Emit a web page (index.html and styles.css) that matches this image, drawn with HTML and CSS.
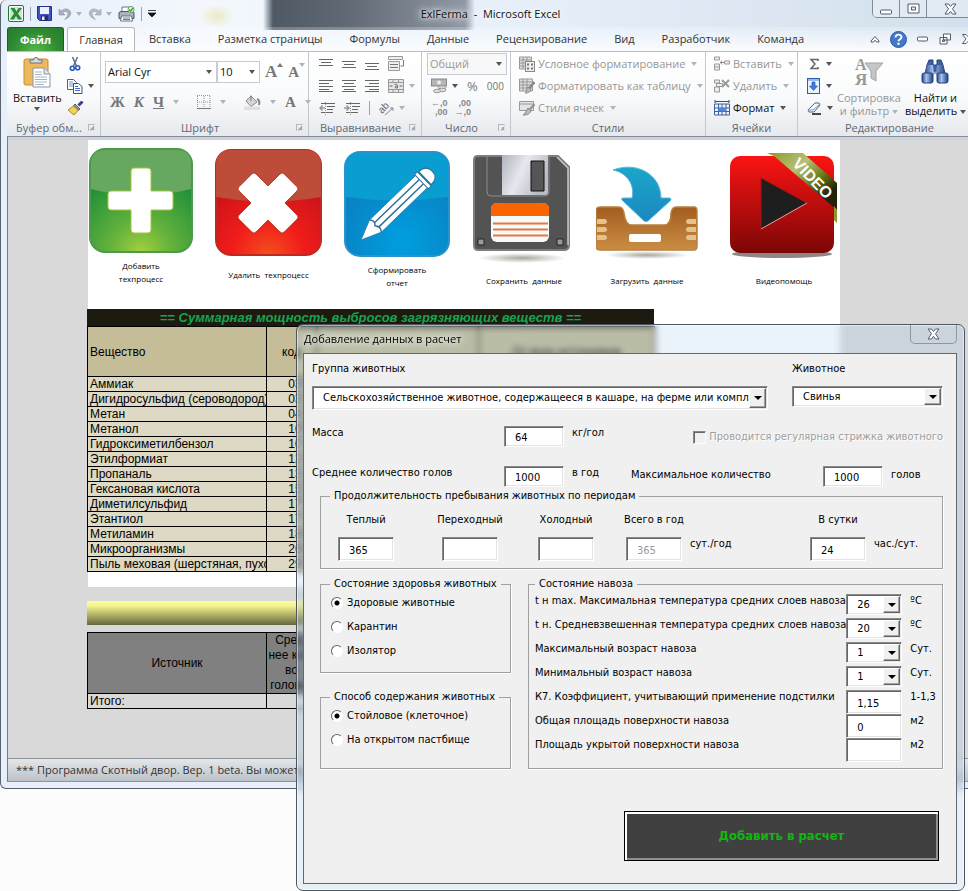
FILE: index.html
```html
<!DOCTYPE html>
<html lang="ru">
<head>
<meta charset="utf-8">
<title>ExlFerma - Microsoft Excel</title>
<link rel="stylesheet" href="styles.css">
</head>
<body>
<div class="desktop">
<main class="excel">
  <header class="titlebar">
    <div class="qat">
      <svg width="16" height="17" viewBox="0 0 16 17"><rect x=".5" y=".5" width="15" height="16" rx="1.5" fill="#fff" stroke="#1e7a35"/><rect x="2" y="2" width="12" height="13" fill="#cfe8cd"/><path d="M2.500 3h4l2 3.500L10.500 3h3.500L10 8.500l4 6h-4l-2-3.500-2 3.500H2l4-6z" fill="#2a8b3f"/></svg>
      <i class="sep"></i>
      <button aria-label="Сохранить"><svg width="15" height="15" viewBox="0 0 15 15"><path d="M.5.5h14v14h-12l-2-2z" fill="#4352c0" stroke="#27318c"/><rect x="3" y="1" width="9" height="7" fill="#eef2fb"/><rect x="4" y="9.500" width="7" height="5" fill="#222b6d"/><rect x="5" y="10.500" width="2.500" height="3.500" fill="#e8ebf5"/></svg></button>
      <button aria-label="Отменить" class="wide"><svg width="14" height="14" viewBox="0 0 14 14"><path d="M1 2v6h6L4.800 5.800C7 3.500 10.500 4.500 9.800 7.500 9.300 9.500 8 11 6.500 12.500 10 11.500 12.800 8.800 12.800 6 12.500 1.500 6.500.5 3.200 4z" fill="#a7b0bb" stroke="#8c96a3" stroke-width=".6"/></svg><i class="arr dim"></i></button>
      <button aria-label="Вернуть" class="wide"><svg width="14" height="14" viewBox="0 0 14 14"><path transform="translate(14 0) scale(-1 1)" d="M1 2v6h6L4.800 5.800C7 3.500 10.500 4.500 9.800 7.500 9.300 9.500 8 11 6.500 12.500 10 11.500 12.800 8.800 12.800 6 12.500 1.500 6.500.5 3.200 4z" fill="#b3bbc5" stroke="#98a1ac" stroke-width=".6"/></svg><i class="arr dim"></i></button>
      <button aria-label="Печать"><svg width="17" height="16" viewBox="0 0 17 16"><path d="M4 6V1h8v5" fill="#fff" stroke="#6c7580"/><path d="M1 6.500l2-1h11l2 1v6H1z" fill="#aab2bc" stroke="#4d5560"/><path d="M3.500 10h10l1 5h-12z" fill="#fff" stroke="#6c7580"/><path d="M5 12h7M5 13.500h7" stroke="#4d86c8"/><circle cx="13" cy="3.500" r="3" fill="#fff" stroke="#58a04c"/><path d="M11.300 3.500l1.400 1.400L15 2" fill="none" stroke="#2f9c2f" stroke-width="1.400"/></svg></button>
      <i class="sep"></i>
      <button aria-label="Настройка панели"><svg width="8" height="8" viewBox="0 0 8 8"><path d="M0 .5h8M0 3h8L4 7z" fill="#111" stroke="#111" stroke-width=".8"/></svg></button>
    </div>
    <h1>ExlFerma&nbsp; -&nbsp; Microsoft Excel</h1>
    <div class="winbtns">
      <button aria-label="Свернуть"><svg width="13" height="12" viewBox="0 0 13 12"><rect x=".5" y="7" width="11" height="4" rx="1" fill="#fff" stroke="#525c6b"/></svg></button>
      <button aria-label="Развернуть"><svg width="13" height="12" viewBox="0 0 13 12"><path d="M1 1h11v9H1zM4.500 4h4v3h-4z" fill="#fff" fill-rule="evenodd" stroke="#525c6b"/></svg></button>
      <button aria-label="Закрыть" class="x"><svg width="13" height="12" viewBox="0 0 13 12"><path d="M1 1h3.500l2 2.500 2-2.500H12L8.500 5.800 12 11H8.500l-2-2.700-2 2.700H1l3.500-5.200z" fill="#fff" stroke="#525c6b"/></svg></button>
    </div>
  </header>

  <nav class="tabs">
    <button class="file">Файл</button>
    <button class="on">Главная</button>
    <button>Вставка</button>
    <button>Разметка страницы</button>
    <button>Формулы</button>
    <button>Данные</button>
    <button>Рецензирование</button>
    <button>Вид</button>
    <button>Разработчик</button>
    <button>Команда</button>
    <div class="mdi">
      <svg width="10" height="8" viewBox="0 0 10 8"><path d="M1 6l4-4.500L9 6v1H6.500L5 5.200 3.500 7H1z" fill="#fff" stroke="#525c6b"/></svg>
      <svg width="17" height="17" viewBox="0 0 17 17"><circle cx="8.500" cy="8.500" r="8" fill="#4278c6" stroke="#2d5ba6"/><path d="M5.500 6.500c0-4 6-3.800 6-.2 0 2-3 2-3 4" fill="none" stroke="#fff" stroke-width="1.800"/><circle cx="8.500" cy="12.800" r="1.200" fill="#fff"/></svg>
      <svg width="12" height="6" viewBox="0 0 12 6"><rect x=".5" y="1" width="10" height="4" rx="1" fill="#fff" stroke="#525c6b"/></svg>
      <svg width="13" height="12" viewBox="0 0 13 12"><path d="M4.500 1h7v6h-7zM1 4.500h7V11H1zM3.500 7h2v1.500h-2z" fill="#fff" fill-rule="evenodd" stroke="#525c6b"/></svg>
      <svg width="12" height="10" viewBox="0 0 12 10"><path d="M.5.5H4l2 2 2-2h3.500L8 5l3.500 4.500H8l-2-2-2 2H.5L4 5z" fill="#fff" stroke="#525c6b"/></svg>
    </div>
  </nav>

  <section class="ribbon">
    <div class="group g-clip">
      <div class="body">
        <button class="big on"><svg width="28" height="32" viewBox="0 0 28 32"><rect x="1" y="3" width="24" height="26" rx="2" fill="#eeb95e" stroke="#c98d2d"/><path d="M7 7V4h3.500a2.500 2.500 0 0 1 5 0H19v3z" fill="#d8dce1" stroke="#6a7078"/><path d="M10 12h11l6 6v13H10z" fill="#fff" stroke="#8795a8"/><path d="M21 12v6h6" fill="#dfe6ee" stroke="#8795a8"/><path d="M12 16h7M12 18.500h7M12 21h12M12 23.500h12M12 26h12M12 28.500h9" stroke="#a6b3c4"/></svg><span>Вставить</span><i class="arr"></i></button>
        <div class="col">
          <button aria-label="Вырезать"><svg width="16" height="16" viewBox="0 0 16 16"><path d="M5.500 1l4 9M10.500 1l-4 9" stroke="#5b6c83" stroke-width="1.500"/><circle cx="5.300" cy="12.200" r="2" fill="none" stroke="#2b59b8" stroke-width="1.600"/><circle cx="10.700" cy="11.700" r="2" fill="none" stroke="#2b59b8" stroke-width="1.600"/></svg></button>
          <button aria-label="Копировать"><svg width="16" height="16" viewBox="0 0 16 16"><path d="M.5 1.500h6l3 3v7h-9z" fill="#fff" stroke="#3c62a8"/><path d="M2 4h4M2 6h5M2 8h5" stroke="#6e93d0"/><path d="M6.500 5.500h5l3.500 3v7H6.500z" fill="#fff" stroke="#2f559c"/><path d="M8 8.500h3M8 10.500h5M8 12.500h5" stroke="#3f70c4"/></svg><i class="arr"></i></button>
          <button aria-label="Формат по образцу"><svg width="17" height="15" viewBox="0 0 17 15"><path d="M15.500.5l-4 4" stroke="#4a3c8c" stroke-width="3"/><path d="M8 3l5 5-2 1.500L6.500 5z" fill="#8d94a3" stroke="#555c6b"/><path d="M6.500 5L11 9.500 7 14 1 9z" fill="#f2d25c" stroke="#ad8a22"/></svg></button>
        </div>
      </div>
      <footer><span>Буфер обм...</span><b class="launch"></b></footer>
    </div>

    <div class="group g-font">
      <div class="body stack">
        <div class="line fontline">
          <span class="combo"><label for="fn" class="sr">Шрифт</label><select id="fn"><option>Arial Cyr</option></select><i class="arr"></i></span>
          <span class="combo size"><label for="fs" class="sr">Размер</label><select id="fs"><option>10</option></select><i class="arr"></i></span>
          <button class="serif a1" aria-label="Увеличить">A<i class="up"></i></button>
          <button class="serif a2" aria-label="Уменьшить">A<i class="arr dim"></i></button>
        </div>
        <div class="line fmt">
          <button class="serif">Ж</button><button class="serif it">К</button><button class="serif un">Ч</button><i class="arr dim"></i><i class="sep"></i>
          <svg width="14" height="14" viewBox="0 0 14 14"><path d="M.5 1v12M7 1v12M13 1v12M0 .5h14M0 7h14" stroke="#999" stroke-dasharray="1 1"/><path d="M0 13.500h14" stroke="#777"/></svg><i class="arr dim"></i><i class="sep"></i>
          <svg width="17" height="16" viewBox="0 0 17 16"><path d="M7 2l6 6-6 4.500L2 7z" fill="#d5d5d5" stroke="#888"/><path d="M7 7V1.500" stroke="#777"/><path d="M13 5c3 1 2.500 4 2 6" fill="none" stroke="#888" stroke-width="2"/><rect y="12.500" width="16" height="3.500" fill="#e1dde0"/></svg><i class="arr dim"></i>
          <button class="serif">A</button><i class="arr dim"></i>
        </div>
      </div>
      <footer><span>Шрифт</span><b class="launch"></b></footer>
    </div>

    <div class="group g-align">
      <div class="body stack">
        <div class="line">
          <svg width="14" height="12" viewBox="0 0 14 12"><path d="M0 1.500h14M2 4.500h10M0 7.500h14" stroke="#666"/></svg>
          <svg width="14" height="12" viewBox="0 0 14 12"><path d="M0 3.500h14M2 6.500h10M0 9.500h14" stroke="#666"/></svg>
          <svg width="14" height="12" viewBox="0 0 14 12"><path d="M0 5.500h14M2 8.500h10M0 11.500h14" stroke="#666"/></svg>
          <svg width="17" height="16" viewBox="0 0 17 16"><path d="M.5.500h14v3H.5zM.5 5.500h11v9H.5z" fill="#eee" stroke="#999"/><path d="M2 8.500h8M2 11.500h8M15.500 4v6h-3" fill="none" stroke="#777"/></svg>
        </div>
        <div class="line">
          <svg width="14" height="12" viewBox="0 0 14 12"><path d="M0 .5h14M0 3.500h10M0 6.500h14M0 9.500h10M0 11.500h14" stroke="#666"/></svg>
          <svg width="14" height="12" viewBox="0 0 14 12"><path d="M0 .5h14M2 3.500h10M0 6.500h14M2 9.500h10M0 11.500h14" stroke="#666"/></svg>
          <svg width="14" height="12" viewBox="0 0 14 12"><path d="M0 .5h14M4 3.500h10M0 6.500h14M4 9.500h10M0 11.500h14" stroke="#666"/></svg>
          <span class="pair"><svg width="17" height="14" viewBox="0 0 17 14"><path d="M.5.5h15v13H.5zM.5 3.500h15M.5 10.500h15M5 .5v3M10.500.5v3M5 10.500v3M10.500 10.500v3" fill="#e6e6e6" stroke="#999"/><path d="M1.500 7h3M11.500 7h3M6.500 5.500c3-.8 3 .3 3 3.500-3.500 0-3.500-2 0-2" fill="none" stroke="#666"/></svg><i class="arr dim"></i></span>
        </div>
        <div class="line">
          <svg width="16" height="13" viewBox="0 0 16 13"><path d="M2 1.500h14M8 4.500h8M8 7.500h6M2 10.500h12" stroke="#666"/><path d="M6 6H1M3.500 3.500L1 6l2.500 2.500" fill="none" stroke="#999" stroke-width="1.500"/><path d="M6.500 0v13" stroke="#999" stroke-dasharray="1 1"/></svg>
          <svg width="16" height="13" viewBox="0 0 16 13"><path d="M2 1.500h14M8 4.500h8M8 7.500h6M2 10.500h12" stroke="#666"/><path d="M0 6h5M2.500 3.500L5 6 2.500 8.500" fill="none" stroke="#999" stroke-width="1.500"/><path d="M6.500 0v13" stroke="#999" stroke-dasharray="1 1"/></svg>
          <i class="sep"></i>
          <span class="pair"><svg width="16" height="15" viewBox="0 0 16 15"><text x="0" y="10" transform="rotate(-45 5 8)" font-family="Liberation Sans" font-size="10" fill="#666">ab</text><path d="M6 14l8-7M14 7h-3M14 7v3" fill="none" stroke="#888"/></svg><i class="arr dim"></i></span>
        </div>
      </div>
      <footer><span>Выравнивание</span><b class="launch"></b></footer>
    </div>

    <div class="group g-num">
      <div class="body stack">
        <span class="combo off"><label for="nf" class="sr">Формат числа</label><select id="nf"><option>Общий</option></select><i class="arr"></i></span>
        <div class="line">
          <span class="pair"><svg width="17" height="16" viewBox="0 0 17 16"><rect x=".5" y="1" width="15" height="7" fill="#b5b5b5" stroke="#888"/><circle cx="8" cy="4.500" r="2" fill="#eee"/><ellipse cx="11" cy="9.500" rx="4" ry="1.800" fill="#ddd" stroke="#999"/><ellipse cx="11" cy="12" rx="4" ry="1.800" fill="#ddd" stroke="#999"/><ellipse cx="6" cy="13" rx="3.500" ry="1.800" fill="#ddd" stroke="#999"/></svg><i class="arr"></i></span>
          <button class="grey pct">%</button><button class="grey sm">000</button>
        </div>
        <div class="line dec">
          <span class="decimal">←,0<br>,00</span><span class="decimal">,00<br>→,0</span>
        </div>
      </div>
      <footer><span>Число</span><b class="launch"></b></footer>
    </div>

    <div class="group g-styles">
      <div class="body stack">
        <button class="cmd off"><svg width="16" height="16" viewBox="0 0 16 16"><path d="M.5 1h12v12H.5zM.5 4h12M.5 7h12M.5 10h12M4 1v12M8 1v12" fill="#ddd" stroke="#999"/><rect x="6.500" y="5.500" width="9" height="10" fill="#eee" stroke="#888"/><path d="M8 8.500h2M12 8.500h2M8 12.500h2M12 12.500h2" stroke="#777" stroke-width="2"/></svg>Условное форматирование<i class="arr dim"></i></button>
        <button class="cmd off"><svg width="16" height="16" viewBox="0 0 16 16"><path d="M.5 1h13v12H.5zM.5 4h13M.5 7h13M.5 10h13M4 1v12M8 1v12" fill="#ddd" stroke="#999"/><path d="M15.500 4l-6 7" stroke="#888" stroke-width="2.500"/><path d="M9 9l3 3c-2 3-4 3-6 3 2-1.500 1-4 3-6z" fill="#bbb" stroke="#888"/></svg>Форматировать как таблицу<i class="arr dim"></i></button>
        <button class="cmd off"><svg width="16" height="16" viewBox="0 0 16 16"><path d="M.5 1.500h14v9H.5zM.5 4h14" fill="#e4e4e4" stroke="#999"/><path d="M15.500 4l-6 7" stroke="#999" stroke-width="2.500"/><path d="M9 8l3 3c-2 4-5 4-8 4 3-1.500 3-5 5-7z" fill="#bbb" stroke="#888"/></svg>Стили ячеек<i class="arr dim"></i></button>
      </div>
      <footer><span>Стили</span></footer>
    </div>

    <div class="group g-cells">
      <div class="body stack">
        <button class="cmd off"><svg width="16" height="16" viewBox="0 0 16 16"><path d="M.5 1h5v3h-5zM.5 8h5v6h-5zM.5 11h5M10.500 5h5v3h-5z" fill="#eee" stroke="#999"/><path d="M6 6.500h4M8 4.500L6.500 6.500 8 8.500" stroke="#888" fill="none"/></svg>Вставить<i class="arr dim"></i></button>
        <button class="cmd off"><svg width="16" height="16" viewBox="0 0 16 16"><path d="M.5 2h5v3h-5zM.5 9h5v5h-5zM2.500 5.500h6v3h-6z" fill="#eee" stroke="#999"/><path d="M8 2l7 7M15 2L8 9" stroke="#999" stroke-width="2"/></svg>Удалить<i class="arr dim"></i></button>
        <button class="cmd"><svg width="16" height="16" viewBox="0 0 16 16"><path d="M1 1.500h14M1 0v3M15 0v3" stroke="#2d4f8e"/><path d="M.5 4h15v11H.5zM.5 8h15M.5 11.500h15M4.500 4v11M8 4v11M12 4v11" fill="#eef3fb" stroke="#3e5f9e"/><rect x="4.500" y="8" width="7" height="3.500" fill="#4f86dc"/></svg>Формат<i class="arr"></i></button>
      </div>
      <footer><span>Ячейки</span></footer>
    </div>

    <div class="group g-edit">
      <div class="body">
        <div class="col">
          <button aria-label="Сумма"><svg width="14" height="12" viewBox="0 0 14 12"><path d="M11 3V1.500H4L8 6l-4 4.500h7V9" fill="none" stroke="#666" stroke-width="1.500"/></svg><i class="arr"></i></button>
          <button aria-label="Заполнить"><svg width="14" height="16" viewBox="0 0 14 16"><rect x=".5" y=".5" width="12" height="15" fill="#eaf2fd" stroke="#2c5fae"/><path d="M5 4h3v4h2.500l-4 4.500L2.500 8H5z" fill="#3f7be0" stroke="#1d4fa0" stroke-width=".6"/><path d="M1 2h11" stroke="#4a7fce"/></svg><i class="arr"></i></button>
          <button aria-label="Очистить"><svg width="15" height="13" viewBox="0 0 15 13"><path d="M8 1h4l1 2-6 7H2L1 8z" fill="#f5f7fa" stroke="#56657c"/><path d="M1 8h5l7-6" fill="none" stroke="#7a9cc9"/><path d="M5 12h9" stroke="#111" stroke-width="1.500"/></svg><i class="arr"></i></button>
        </div>
        <button class="big off"><svg width="30" height="32" viewBox="0 0 30 32"><path d="M11 7h18l-7 8v10l-5-3v-7z" fill="#c6c6c6" stroke="#a3a3a3"/><text x="1" y="14" font-family="Liberation Serif" font-size="16" font-weight="bold" fill="#999">А</text><text x="1" y="29" font-family="Liberation Serif" font-size="17" font-weight="bold" fill="#999">Я</text></svg><span>Сортировка<br>и фильтр <i class="arr dim"></i></span></button>
        <button class="big on"><svg width="28" height="32" viewBox="0 0 28 32"><defs><linearGradient id="bi"><stop offset="0" stop-color="#27498c"/><stop offset=".4" stop-color="#a9c3ec"/><stop offset="1" stop-color="#1f3f80"/></linearGradient></defs><path d="M8 4h4v5h4V4h4l2 5 2 9h-9v-3h-2v3H4l2-9z" fill="#3c5fa6" stroke="#22427f"/><path d="M6 9h6l1 9H3.500zM16 9h6l2.500 9H15z" fill="url(#bi)"/><rect x="1" y="17" width="11" height="10" rx="2" fill="url(#bi)" stroke="#22427f"/><rect x="16" y="17" width="11" height="10" rx="2" fill="url(#bi)" stroke="#22427f"/></svg><span>Найти и<br>выделить <i class="arr"></i></span></button>
      </div>
      <footer><span>Редактирование</span></footer>
    </div>
  </section>

  <section class="sheet">
    <div class="page">
      <div class="tiles">
        <button class="tile t1">
          <svg width="104" height="116" viewBox="0 0 104 116"><defs><radialGradient id="gr" cx=".5" cy="1" r=".75"><stop offset="0" stop-color="#a3cf3c"/><stop offset=".4" stop-color="#64b23c"/><stop offset="1" stop-color="#23913a"/></radialGradient></defs><rect x="1" y="5" width="102" height="103" rx="15" fill="url(#gr)" stroke="#4c9a4a" stroke-width="2"/><path d="M2 45V20Q2 6 16 6h72q14 0 14 14v25Q52 58 2 45z" fill="#66a860"/><path d="M45 24h14q3 0 3 3v20h19q3 0 3 3v13q0 3-3 3H62v20q0 3-3 3H45q-3 0-3-3V66H22q-3 0-3-3V50q0-3 3-3h20V27q0-3 3-3z" fill="#fff" stroke="#a6c63a"/></svg>
          <span>Добавить<br>техпроцесс</span></button>
        <button class="tile t2">
          <svg width="107" height="116" viewBox="0 0 107 116"><defs><radialGradient id="rd" cx=".5" cy="1" r=".75"><stop offset="0" stop-color="#f4501e"/><stop offset=".45" stop-color="#f01d1a"/><stop offset="1" stop-color="#cb131a"/></radialGradient></defs><rect x="1" y="6" width="105" height="105" rx="15" fill="url(#rd)" stroke="#bf2a20" stroke-width="2"/><path d="M1 53V21Q1 6 16 6h75q15 0 15 15v32Q53 62 1 53z" fill="#bd4d38"/><g transform="translate(53 59) rotate(45)"><path d="M-9-32H9q3 0 3 3v17h17q3 0 3 3V9q0 3-3 3H12v17q0 3-3 3H-9q-3 0-3-3V12h-17q-3 0-3-3V-9q0-3 3-3h17v-17q0-3 3-3z" fill="#fff" stroke="#b03018" stroke-width=".8"/></g></svg>
          <span>Удалить&nbsp; техпроцесс</span></button>
        <button class="tile t3">
          <svg width="106" height="116" viewBox="0 0 106 116"><defs><radialGradient id="bl" cx=".55" cy=".85" r=".7"><stop offset="0" stop-color="#009fe0"/><stop offset="1" stop-color="#0a7fbf"/></radialGradient></defs><rect x="1" y="8" width="104" height="104" rx="15" fill="url(#bl)" stroke="#2b93cc" stroke-width="2"/><path d="M2 53V23Q2 9 16 9h74q14 0 14 14v30Q53 60 2 53z" fill="#0a9dd2"/><g transform="translate(17 96) rotate(-44)"><path d="M0 0L20-8.500H86v17H20z" fill="#fff" stroke="#2a7ba8" stroke-width=".8"/><path d="M20-8.500q4 4 0 8 4 5 0 9M22-3h62M22 3h62" fill="none" stroke="#2a6f98" stroke-width="1.400"/><path d="M84-10h4v20h-4z" fill="#fff" stroke="#2a6f98"/><path d="M89-9q10 0 10 9T89 9z" fill="#fff" stroke="#2a6f98"/></g></svg>
          <span>Сформировать<br>отчет</span></button>
        <button class="tile t4">
          <svg width="102" height="120" viewBox="0 0 102 120"><defs><linearGradient id="sh" x2="1" y2=".4"><stop offset="0" stop-color="#aeb3be"/><stop offset=".5" stop-color="#e6e8ed"/><stop offset="1" stop-color="#b9bdc8"/></linearGradient><radialGradient id="dr"><stop offset="0" stop-color="#a8a8a0"/><stop offset="1" stop-color="#fff"/></radialGradient></defs><ellipse cx="49" cy="114" rx="44" ry="5" fill="url(#dr)"/><path d="M5 12h80l11 11v78q0 5-5 5H5q-4 0-4-5V16q0-4 4-4z" fill="#535353" stroke="#7d7d7d" stroke-width="2"/><path d="M84 13l11 11v77" fill="none" stroke="#c9c9c9" stroke-width="1.500"/><path d="M14 12v36q0 4 4 4h54q4 0 4-4V12" fill="none" stroke="#8d8d8d"/><path d="M29 11h46v37q0 3-3 3H29z" fill="url(#sh)"/><path d="M58 17h13v30H58z" fill="#555" stroke="#111"/><rect x="18" y="59" width="58" height="39" rx="6" fill="#f5fbfc"/><path d="M18 72v-7q0-6 6-6h46q6 0 6 6v7z" fill="#f96500"/><path d="M20 79.500h55M20 85.500h55M20 91.500h55" stroke="#e8793a" stroke-width="2"/><path d="M5 95h6v6H5zM84 95h6v6h-6z" fill="#9999a2" stroke="#222"/></svg>
          <span>Сохранить&nbsp; данные</span></button>
        <button class="tile t5">
          <svg width="102" height="120" viewBox="0 0 102 120"><defs><linearGradient id="wd" x2="0" y2="1"><stop offset="0" stop-color="#a15d20"/><stop offset="1" stop-color="#cb8d43"/></linearGradient><linearGradient id="ar" x2="0" y2="1"><stop offset="0" stop-color="#1ba6ca"/><stop offset="1" stop-color="#1b88c0"/></linearGradient></defs><ellipse cx="51" cy="111" rx="42" ry="4" fill="url(#dr)"/><path d="M4 63h19q4 0 5 6c1 8 3 12 8 12h32c5 0 7-4 7-12q1-6 5-6h18q3 0 3 4v35q0 4-3 4H4q-4 0-4-4V67q0-4 4-4z" fill="url(#wd)" stroke="#b8813e" stroke-width="1.500"/><path d="M1 75h7q3 0 3 2.500T8 80H1zM1 83h7q3 0 3 2.500T8 88H1zM1 91h7q3 0 3 2.500T8 96H1zM100 75h-7q-3 0-3 2.500t3 2.500h7zM100 83h-7q-3 0-3 2.500t3 2.500h7zM100 91h-7q-3 0-3 2.500t3 2.500h7z" fill="#e3c28c"/><rect x="33" y="90" width="32" height="8" rx="2" fill="#fff"/><path d="M17 26C40 17 65 30 65 54h9q2 1 0 3L52 77q-2 1-4 0L26 56q-1-2 1-2h9C39 42 32 29 17 26z" fill="url(#ar)" stroke="#5bb6dc"/></svg>
          <span>Загрузить&nbsp; данные</span></button>
        <button class="tile t6">
          <svg width="108" height="120" viewBox="0 0 108 120"><defs><linearGradient id="vd" x2="0" y2="1"><stop offset="0" stop-color="#fb1414"/><stop offset="1" stop-color="#7c0606"/></linearGradient><linearGradient id="rb" x2="1" y2="1"><stop offset="0" stop-color="#8b9a25"/><stop offset=".35" stop-color="#b9c178"/><stop offset=".6" stop-color="#66760f"/><stop offset=".8" stop-color="#20240a"/></linearGradient></defs><ellipse cx="52" cy="110" rx="50" ry="4" fill="#433" opacity=".6"/><rect x="0" y="12" width="104" height="97" rx="10" fill="url(#vd)"/><path d="M0 100Q20 70 58 57" fill="none" stroke="#a11" stroke-width=".6"/><path d="M31 34v51l46-26z" fill="#1e1e1e" stroke="#a11"/><path d="M31 85l46-26" stroke="#d9a0a0"/><path d="M37 9h36l34 30v27L44 12z" fill="url(#rb)"/><path d="M104 62l3 4v13l-3-3z" fill="#8b9a25"/><text x="83" y="40" transform="rotate(46 83 34)" text-anchor="middle" font-family="Liberation Sans" font-weight="bold" font-size="16" fill="#fff">VIDEO</text></svg>
          <span>Видеопомощь</span></button>
      </div>
      <h2>== Суммарная мощность выбросов загрязняющих веществ ==</h2>
      <table class="grid sum">
        <colgroup><col class="c1"><col class="c2"><col class="c3"><col class="c4"></colgroup>
        <thead><tr><th>Вещество</th><th class="mid">код</th><th></th><th class="mid">От всех источников</th></tr></thead>
        <tbody>
          <tr><td>Аммиак</td><td>0303</td><td></td><td></td></tr>
          <tr><td>Дигидросульфид (сероводород)</td><td>0333</td><td></td><td></td></tr>
          <tr><td>Метан</td><td>0410</td><td></td><td></td></tr>
          <tr><td>Метанол</td><td>1052</td><td></td><td></td></tr>
          <tr><td>Гидроксиметилбензол</td><td>1071</td><td></td><td></td></tr>
          <tr><td>Этилформиат</td><td>1246</td><td></td><td></td></tr>
          <tr><td>Пропаналь</td><td>1314</td><td></td><td></td></tr>
          <tr><td>Гексановая кислота</td><td>1531</td><td></td><td></td></tr>
          <tr><td>Диметилсульфид</td><td>1707</td><td></td><td></td></tr>
          <tr><td>Этантиол</td><td>1728</td><td></td><td></td></tr>
          <tr><td>Метиламин</td><td>1849</td><td></td><td></td></tr>
          <tr><td>Микроорганизмы</td><td>2603</td><td></td><td></td></tr>
          <tr><td>Пыль меховая (шерстяная, пуховая)</td><td>2920</td><td></td><td></td></tr>
        </tbody>
      </table>
    </div>
    <div class="yellow"></div>
    <table class="grid src">
      <colgroup><col class="c1"><col class="c2"><col class="c3"><col class="c4"></colgroup>
      <thead><tr><th class="mid">Источник</th><th class="mid">Сред-<br>нее кол-<br>во<br>головы,</th><th></th><th></th></tr></thead>
      <tbody><tr><td>Итого:</td><td></td><td></td><td></td></tr></tbody>
    </table>
  </section>
  <footer class="status">*** Программа Скотный двор. Вер. 1 beta. Вы можете</footer>
</main>

<section class="dialog" role="dialog" aria-labelledby="dt">
  <header>
    <h2 id="dt">Добавление данных в расчет</h2>
    <button class="close" aria-label="Закрыть"><svg width="13" height="12" viewBox="0 0 13 12"><path d="M1 1h3.500l2 2.500 2-2.500H12L8.500 5.800 12 11H8.500l-2-2.700-2 2.700H1l3.500-5.200z" fill="#fff" stroke="#525c6b"/></svg></button>
  </header>
  <form class="client">
    <div class="who">
      <div class="f"><label for="grp">Группа животных</label>
        <span class="sel tall"><select id="grp"><option>Сельскохозяйственное животное, содержащееся в кашаре, на ферме или комплексе</option></select><i></i></span></div>
      <div class="f"><label for="kind">Животное</label>
        <span class="sel"><select id="kind"><option>Свинья</option></select><i></i></span></div>
    </div>
    <div class="heads">
      <label for="mass">Масса</label><input id="mass" value="64"><span class="unit">кг/гол</span>
      <label class="check"><input type="checkbox" disabled>Проводится регулярная стрижка животного</label>
    </div>
    <div class="heads">
      <label for="avg">Среднее количество голов</label><input id="avg" value="1000"><span class="unit">в год</span>
      <label for="max" class="low">Максимальное количество</label><input id="max" value="1000"><span class="unit low">голов</span>
    </div>
    <div class="sets">
      <fieldset class="periods">
        <legend>Продолжительность пребывания животных по периодам</legend>
        <div class="cells">
          <div class="p"><label for="p1">Теплый</label><input id="p1" value="365"></div>
          <div class="p"><label for="p2">Переходный</label><input id="p2"></div>
          <div class="p"><label for="p3">Холодный</label><input id="p3"></div>
          <div class="p"><label for="p4">Всего в год</label><input id="p4" value="365" disabled></div>
          <span class="per">сут./год</span>
          <div class="p"><label for="p5">В сутки</label><input id="p5" value="24"></div>
          <span class="per">час./сут.</span>
        </div>
      </fieldset>
      <div class="left">
        <fieldset class="radios health">
          <legend>Состояние здоровья животных</legend>
          <label><input type="radio" name="h" checked>Здоровые животные</label>
          <label><input type="radio" name="h">Карантин</label>
          <label><input type="radio" name="h">Изолятор</label>
        </fieldset>
        <fieldset class="radios keep">
          <legend>Способ содержания животных</legend>
          <label><input type="radio" name="k" checked>Стойловое (клеточное)</label>
          <label><input type="radio" name="k">На открытом пастбище</label>
        </fieldset>
      </div>
      <fieldset class="manure">
        <legend>Состояние навоза</legend>
        <label for="m1">t н max. Максимальная температура средних слоев навоза</label><span class="sel"><select id="m1"><option>26</option></select><i></i></span><span>ºC</span>
        <label for="m2">t н. Средневзвешенная температура средних слоев навоза</label><span class="sel"><select id="m2"><option>20</option></select><i></i></span><span>ºC</span>
        <label for="m3">Максимальный возраст навоза</label><span class="sel"><select id="m3"><option>1</option></select><i></i></span><span>Сут.</span>
        <label for="m4">Минимальный возраст навоза</label><span class="sel"><select id="m4"><option>1</option></select><i></i></span><span>Сут.</span>
        <label for="m5">К7. Коэффициент, учитывающий применение подстилки</label><input id="m5" value="1,15"><span class="range">1-1,3</span>
        <label for="m6">Общая площадь поверхности навоза</label><input id="m6" value="0"><span>м2</span>
        <label for="m7">Площадь укрытой поверхности навоза</label><input id="m7"><span>м2</span>
      </fieldset>
    </div>
    <button type="button" class="add">Добавить в расчет</button>
  </form>
</section>
</div>
</body>
</html>
```
FILE: styles.css
```css
* { box-sizing: border-box; }
body { margin: 0; background: #fcfcfc; font: 11px/16px "Open Sans", "Noto Sans", sans-serif; color: #111; }
button { font: inherit; color: inherit; background: none; border: 0; padding: 0; margin: 0; }
h1, h2 { margin: 0; font: inherit; }
svg { display: block; flex: none; }
i { font-style: normal; }
.sr { position: absolute; width: 1px; height: 1px; overflow: hidden; clip-path: inset(50%); }
.desktop { position: relative; min-height: 100vh; overflow: hidden; }

/* Excel window; it runs past the right edge of the desktop */
.excel {
  margin-right: -14px; padding: 0 7px 6px 6px;
  border: 1px solid #59626d; border-top: 0; border-radius: 6px;
  background: linear-gradient(180deg, transparent 30px, #e6effa 60px),
    radial-gradient(ellipse 18px 12px at 216px 16px, rgba(222,214,120,.4), transparent),
    linear-gradient(90deg, transparent 262px, rgba(50,62,74,.85) 272px, rgba(62,72,84,.8) 350px, rgba(105,114,126,.7) 464px, transparent 474px) 0 0 / 100% 30px no-repeat,
    linear-gradient(90deg, #e4eefa 0, #f4f8fd 200px, #e3edf8 60%, #d3dfec 100%);
}
.titlebar { display: grid; grid-template-columns: 1fr auto 1fr; height: 27px; }
.titlebar h1 { align-self: center; text-shadow: 0 0 4px #fff, 0 0 8px #fff, 0 0 12px #fff; }
.qat { display: flex; align-items: center; gap: 6px; padding-left: 1px; }
.qat button { display: flex; align-items: center; gap: 4px; }
.sep { width: 1px; height: 14px; background: #9aa3ad; }
.arr { display: inline-block; flex: none; border: 3px solid transparent; border-top: 4px solid #555; border-bottom: 0; }
.arr.dim { border-top-color: #b0b4b9; }
.winbtns { justify-self: end; display: flex; height: 18px; border: 1px solid #7f8a97; border-top: 0; border-radius: 0 0 5px 5px; }
.winbtns button { width: 27px; display: grid; place-items: center; border-right: 1px solid #7f8a97; background: rgba(255,255,255,.3); }
.winbtns .x { width: 46px; border: 0; }

.tabs { display: flex; height: 24px; background: linear-gradient(rgba(255,255,255,.2), rgba(255,255,255,.8)); }
.tabs button { padding: 0 14px 0 13px; color: #333; white-space: nowrap; }
.tabs .file { width: 57px; margin-right: 3px; padding: 0; border: 1px solid #1c5e22; border-bottom: 0; border-radius: 3px 3px 0 0; color: #fff; font-weight: bold; background: radial-gradient(ellipse at 50% 100%, #58b64c, #2e8b32 60%, #257a2c); }
.tabs .on { width: 68px; margin-right: 1px; padding: 0; border: 1px solid #b0b7bf; border-bottom: 0; border-radius: 3px 3px 0 0; background: #fff; }
.mdi { margin-left: auto; display: flex; align-items: center; gap: 10px; }

.ribbon { display: flex; height: 86px; margin-right: -7px; border-top: 1px solid #b9bfc7; border-bottom: 1px solid #868c94; background: linear-gradient(#fff, #fafbfc 50%, #e6e9ed); }
.group { flex: none; display: flex; flex-direction: column; border-right: 1px solid #c3c8ce; }
.body { display: flex; height: 67px; padding: 1px 4px 0; }
.stack { flex-direction: column; }
.line { display: flex; align-items: center; height: 22px; gap: 9px; }
.pair { display: flex; align-items: center; gap: 4px; }
.group footer { display: flex; align-items: center; height: 17px; padding: 0 3px; color: #5d6876; }
.group footer span { flex: 1; text-align: center; white-space: nowrap; }
.launch { width: 7px; height: 7px; margin-right: 2px; border: 1px solid #b3b8bf; border-right-color: #e0e0e0; border-bottom-color: #e0e0e0; background: linear-gradient(135deg, transparent 60%, #a3a9b1 60%); }
.g-clip { width: 94px; } .g-font { width: 208px; } .g-align { width: 113px; } .g-num { width: 89px; }
.g-styles { width: 195px; } .g-cells { width: 92px; } .g-edit { flex: 1; border: 0; }
.big { display: flex; flex-direction: column; align-items: center; line-height: 13px; padding-top: 3px; white-space: nowrap; }
.big span { padding-top: 3px; }
.big > .arr { margin-top: 3px; }
.big .arr { vertical-align: middle; }
.off { color: #969696; }
.g-clip .body { gap: 5px; padding-left: 6px; }
.col button { display: flex; align-items: center; height: 22px; gap: 5px; }
.combo { flex: none; display: grid; align-items: center; width: 112px; height: 22px; border: 1px solid #c6ccd3; background: #fff; }
.combo.size { width: 43px; }
.combo select { grid-area: 1/1; appearance: none; border: 0; padding: 0 2px; background: none; font: inherit; color: inherit; width: 100%; }
.combo > .arr { grid-area: 1/1; justify-self: end; margin-right: 4px; pointer-events: none; }
.combo.off { width: 80px; background: #f8f8f8; }
.combo.off select { color: #999; }
.serif { font: bold 15px/18px "Liberation Serif", serif; color: #777; }
.it { font-style: italic; } .un { text-decoration: underline; }
.fontline { gap: 0; height: 38px; }
.fontline .serif { display: flex; align-items: flex-start; }
.a1 { font-size: 17px; margin-left: 5px; } .a2 { margin-left: 5px; }
.up { border: 3px solid transparent; border-bottom: 4px solid #777; border-top: 0; }
.fmt { padding-left: 5px; justify-content: space-between; }
.g-align .body { padding-left: 10px; }
.g-num .body { padding-left: 5px; }
.g-num .line { padding-left: 4px; gap: 9px; }
.g-num .line.dec { gap: 7px; }
.grey { color: #777; font-size: 10px; } .pct { font-size: 13px; }
.decimal { font: bold 9px/9px "Liberation Sans", sans-serif; color: #888; text-align: right; }
.g-styles .body, .g-cells .body { padding-left: 8px; }
.cmd { display: flex; align-items: center; height: 22px; gap: 3px; white-space: nowrap; }
.cmd .arr { margin-left: 3px; }
.g-edit .body { padding-left: 9px; gap: 4px; }

.sheet { margin-right: -7px; padding: 3px 0 49px 79px; border-left: 1px solid #747d87; border-bottom: 1px solid #8d949c; background: linear-gradient(#ccd3da 3px, #d9d9d9 3px); }
.page { width: 753px; height: 447px; background: linear-gradient(90deg, #d9d9d9 1px, #fff 1px); }
.tiles { display: grid; grid-template-columns: 126px 129px 129px 123px 134px 1fr; align-items: start; height: 169px; padding: 4px 0 0 2px; font-size: 8px; line-height: 13px; color: #000; }
.tile { display: grid; justify-content: start; justify-items: center; width: max-content; }
.t1 svg { margin-bottom: -1px; }
.t2 svg { margin-bottom: 8px; }
.t3 svg { margin-bottom: 3px; }
.t4 svg, .t5 svg, .t6 svg { margin-bottom: 10px; }
.page h2 { width: 567px; height: 17px; background: #1d1b10; color: #17a350; text-align: center; font: italic bold 13px/17px "Liberation Sans", sans-serif; white-space: nowrap; }
.grid { border-collapse: collapse; table-layout: fixed; width: 568px; font: 12px/14px "Liberation Sans", sans-serif; color: #000; }
.grid th, .grid td { border: 1px solid #000; padding: 0 2px; font-weight: normal; text-align: left; white-space: nowrap; overflow: hidden; }
.grid td { height: 15px; }
.grid td + td { text-align: right; padding-right: 1px; }
.grid .mid { text-align: center; }
.c1 { width: 179px; } .c2 { width: 50px; } .c3 { width: 162px; } .c4 { width: 176px; }
.sum th { height: 50px; background: #c4bd97; }
.sum td { background: #ddd9c4; }
.yellow { width: 567px; height: 24px; margin: 14px 0 7px; background: linear-gradient(#ffff99, #f4f48f 20%, #66663d); }
.src th { height: 61px; background: #808080; line-height: 15px; }
.grid.src th { padding: 0; }
.status { height: 23px; margin-right: -7px; padding: 3px 8px; border-left: 1px solid #747d87; border-bottom: 1px solid #8d949c; background: linear-gradient(#e4e7ea, #bcc2c8); color: #333; }

/* Glass dialog over the sheet */
.dialog {
  position: absolute; left: 296px; right: 3px; top: 324px; bottom: 0; padding: 0 7px 6px 6px;
  display: flex; flex-direction: column;
  border: 1px solid #4d5660; border-radius: 7px;
  background: rgba(150,190,230,.2); box-shadow: inset 0 0 0 1px rgba(255,255,255,.5);
  backdrop-filter: blur(3px);
  font: 11px/14px "DejaVu Sans Condensed", "DejaVu Sans", sans-serif; color: #000;
}
.dialog header { display: flex; justify-content: space-between; height: 28px; padding-left: 1px; }
.dialog h2 { font: 11px/28px "Open Sans", "Noto Sans", sans-serif; text-shadow: 0 0 6px #fff, 0 0 10px #fff; }
.close { display: grid; place-items: center; width: 47px; height: 19px; border: 1px solid #8d97a3; border-top: 0; border-radius: 0 0 5px 5px; }
.client { flex: 1; padding: 8px 13px 0 8px; border: 1px solid #5f6873; background: #f0f0f0; }
.dialog input:not([type]), .sel {
  width: 100%; height: 21px; min-width: 0; background: #fff; border: 1px solid; border-color: #888 #fff #fff #888;
  box-shadow: inset 1px 1px #666, inset -1px -1px #e3e3e3; border-radius: 0;
}
.dialog input, .dialog select { font: inherit; color: inherit; margin: 0; }
.dialog input:not([type]) { padding: 2px 10px 0; }
.dialog input:disabled { color: #999; }
.sel { display: grid; }
.sel select { grid-area: 1/1; width: 100%; min-width: 0; appearance: none; border: 0; border-radius: 0; background: none; padding: 0 17px 0 10px; outline: 0; }
.sel > i { grid-area: 1/1; justify-self: end; width: 17px; margin: 1px; background: #f0f0f0; border: 1px solid; border-color: #fff #666 #666 #fff; box-shadow: inset -1px -1px #a0a0a0; display: grid; place-items: center; pointer-events: none; }
.sel > i::before { content: ""; border: 4px solid transparent; border-top-color: #000; border-bottom: 0; }
.sel.tall { height: 24px; }
.who { display: grid; grid-template-columns: 1fr 151px; gap: 24px; height: 64px; }
.f { display: grid; gap: 10px; align-content: start; }
.heads { display: grid; grid-template-columns: 192px 60px 67px 1fr 60px 60px; height: 40px; align-items: start; }
.unit { padding-left: 8px; }
.low { padding-top: 2px; }
.check { grid-column: 4 / 7; justify-self: end; display: flex; align-items: center; gap: 3px; padding-top: 4px; color: #a0a0a0; text-shadow: 1px 1px #fff; white-space: nowrap; }
.check input { appearance: none; width: 13px; height: 13px; border: 1px solid; border-color: #888 #fff #fff #888; box-shadow: inset 1px 1px #666; }
.sets { display: grid; grid-template-columns: 191px 1fr; gap: 8px 17px; margin: -17px 0 0 8px; }
fieldset { min-width: 0; margin: 0; border: 1px solid #a0a0a0; box-shadow: 1px 1px #fff; padding: 0 8px; }
legend { padding: 0 4px; margin-left: 1px; white-space: nowrap; }
.periods { grid-column: 1 / 3; height: 80px; }
.cells { display: grid; grid-template-columns: 104px 96px 88px 64px 120px 64px 1fr; padding: 10px 0 0 9px; white-space: nowrap; }
.p { display: grid; justify-items: center; justify-content: start; grid-template-columns: 56px; gap: 10px; }
.dialog .p input { height: 24px; }
.per { padding-top: 24px; }
.left { display: grid; gap: 17px; }
.radios { padding-left: 10px; }
.radios legend { margin-left: -1px; }
.radios label { display: flex; align-items: center; height: 24px; gap: 4px; }
.radios input { appearance: none; width: 12px; height: 12px; border-radius: 50%; border: 1px solid; border-color: #666 #fff #fff #666; background: #fff; }
.radios input:checked { background: radial-gradient(#000 2px, #fff 3px); }
.health { height: 96px; } .keep { height: 79px; }
.manure { display: grid; grid-template-columns: 1fr 56px 40px; grid-auto-rows: 24px; align-content: start; padding: 3px 0 0 6px; white-space: nowrap; }
.manure legend { margin-left: 0; }
.dialog .manure input { height: 24px; }
.manure > span:not(.sel) { padding-left: 8px; }
.add { display: block; width: 315px; height: 50px; margin: 42px 4px 0 auto; background: #404040; border: 1px solid #000; box-shadow: inset 2px 2px #fff, inset -2px -2px #909090; color: #14b414; font: bold 13px/16px "DejaVu Sans Condensed", "DejaVu Sans", sans-serif; }
```
